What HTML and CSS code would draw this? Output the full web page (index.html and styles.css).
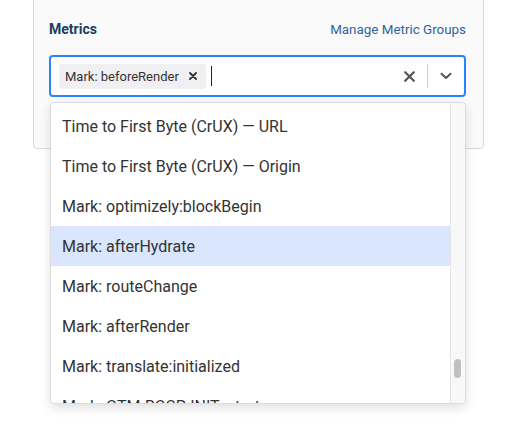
FILE: index.html
```html
<!DOCTYPE html>
<html>
<head>
<meta charset="utf-8">
<link rel="stylesheet" href="styles.css">
</head>
<body>
<div class="card">
  <div class="header">
    <span class="title">Metrics</span>
    <a class="link">Manage Metric Groups</a>
  </div>
  <div class="select">
    <div class="values">
      <span class="chip">Mark: beforeRender <span class="chip-x">
        <svg width="8" height="8" viewBox="0 0 8 8"><path d="M1 1L7 7M7 1L1 7" stroke="#333" stroke-width="1.8" stroke-linecap="round"/></svg>
      </span></span>
      <span class="cursor"></span>
    </div>
    <div class="indicators">
      <span class="clear"><svg width="11" height="11" viewBox="0 0 11 11"><path d="M1.2 1.2L9.8 9.8M9.8 1.2L1.2 9.8" stroke="#555" stroke-width="2.2" stroke-linecap="round"/></svg></span>
      <span class="sep"></span>
      <span class="chev"><svg width="12" height="8" viewBox="0 0 12 8"><path d="M1.5 1.8L6 6L10.5 1.8" fill="none" stroke="#555" stroke-width="2" stroke-linecap="round" stroke-linejoin="round"/></svg></span>
    </div>
  </div>
</div>
<div class="menu">
  <div class="options">
    <div class="opt">Time to First Byte (CrUX) — URL</div>
    <div class="opt">Time to First Byte (CrUX) — Origin</div>
    <div class="opt">Mark: optimizely:blockBegin</div>
    <div class="opt focused">Mark: afterHydrate</div>
    <div class="opt">Mark: routeChange</div>
    <div class="opt">Mark: afterRender</div>
    <div class="opt">Mark: translate:initialized</div>
    <div class="opt">Mark: GTM-BCCP-INIT_start</div>
  </div>
  <div class="track"><div class="thumb"></div></div>
</div>
</body>
</html>
```
FILE: styles.css
```css
* { box-sizing: border-box; }
html, body { margin: 0; padding: 0; background: #fff; }
body {
  font-family: Roboto, "Liberation Sans", Arial, sans-serif;
  width: 529px;
  height: 448px;
  overflow: hidden;
  position: relative;
}
.card {
  margin: -10px 0 0 33px;
  width: 451px;
  height: 159px;
  background: #fafafb;
  border: 1px solid #d9d9d9;
  border-radius: 0 0 4px 4px;
  padding: 30px 17px 0 15px;
}
.header {
  display: flex;
  justify-content: space-between;
  align-items: baseline;
  height: 20px;
}
.title {
  font-size: 14px;
  font-weight: 700;
  color: #173f5f;
}
.link {
  font-size: 13.4px;
  color: #30649c;
}
.select {
  margin-top: 14px;
  height: 42px;
  border: 2px solid #2684ff;
  border-radius: 4px;
  background: #fff;
  display: flex;
  align-items: center;
  justify-content: space-between;
  padding-left: 8px;
}
.values {
  display: flex;
  align-items: center;
}
.chip {
  display: flex;
  align-items: center;
  height: 25px;
  background: #f0f0f2;
  border-radius: 3px;
  padding: 0 9px 0 6px;
  font-size: 13px;
  color: #333;
}
.chip-x {
  display: flex;
  margin-left: 10px;
}
.cursor {
  width: 1px;
  height: 20px;
  background: #222;
  margin-left: 5px;
}
.indicators {
  display: flex;
  align-items: center;
  height: 100%;
}
.clear {
  display: flex;
  padding: 0 12px 0 8px;
}
.sep {
  width: 1px;
  height: 24px;
  background: #ccc;
}
.chev {
  display: flex;
  padding: 0 12px 0 12px;
}
.menu {
  position: absolute;
  left: 50px;
  top: 102px;
  width: 416px;
  height: 302px;
  background: #fff;
  border: 1px solid #dcdcdc;
  border-radius: 4px;
  box-shadow: 0 4px 11px rgba(0,0,0,0.12);
  display: flex;
  overflow: hidden;
}
.options {
  flex: 1;
  padding-top: 3px;
}
.opt {
  height: 40px;
  display: flex;
  align-items: center;
  padding-left: 11px;
  font-size: 16px;
  color: #333;
}
.opt.focused { background: #d9e6fd; }
.track {
  width: 15px;
  background: #f8f8f8;
  border-left: 1px solid #e6e6e6;
  padding: 256px 0 0 3px;
}
.thumb {
  width: 7px;
  height: 19px;
  border-radius: 4px;
  background: #c1c1c1;
}
```
